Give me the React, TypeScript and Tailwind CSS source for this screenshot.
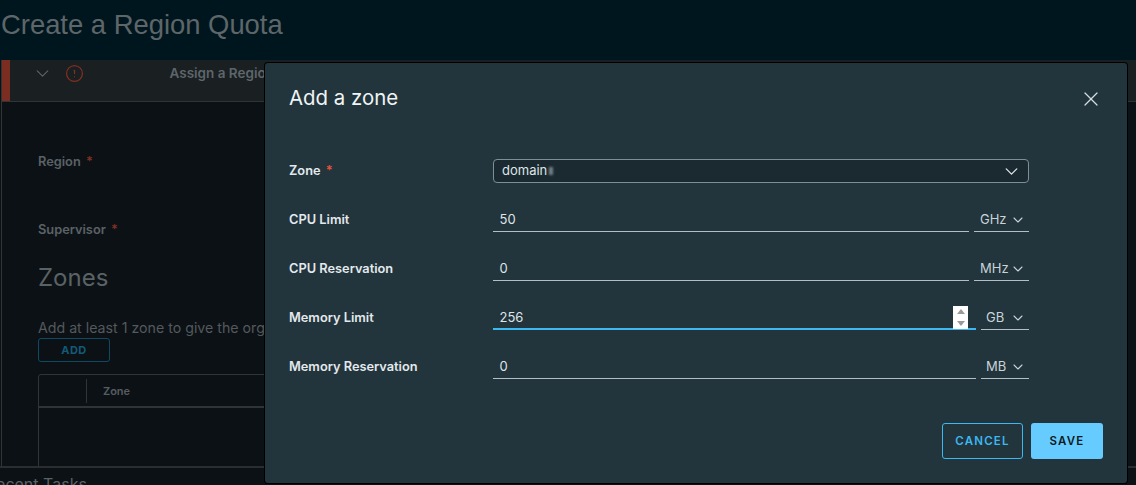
import { AlertCircle, ChevronDown, X } from 'lucide-react';

const font = "[font-family:'Inter',sans-serif]";

function UnitSelect({ unit, narrow }: { unit: string; narrow?: boolean }) {
  return (
    <div className={`flex h-[24px] items-center justify-between border-b border-[#b3bfc5] text-[13px] text-[#c9d3d8] ${narrow ? 'w-[48px] pl-[5px]' : 'w-[55px] pl-[6px]'}`}>
      <span>{unit}</span>
      <ChevronDown className="mr-[3px] text-[#c9d3d8]" size={16} strokeWidth={1.6} />
    </div>
  );
}

function Row({ label, value, unit, focused, wide }: { label: string; value: string; unit: string; focused?: boolean; wide?: boolean }) {
  return (
    <div className="flex h-[24px] items-end">
      <label className="w-[204px] self-center text-[12.8px] font-semibold text-[#e3e9ec]">{label}</label>
      <div className={`relative flex h-[24px] items-center pl-[6.5px] text-[13px] text-[#dfe5e8] ${wide ? 'w-[483px]' : 'w-[476px]'} ${focused ? 'border-b-2 border-[#3db8f0] pt-[1px]' : 'border-b border-[#b3bfc5]'}`}>
        {value}
        {focused && (
          <div className="absolute right-[8px] top-0 flex h-[23px] w-[15px] flex-col items-center justify-center gap-[7px] bg-white">
            <svg width="8" height="5" viewBox="0 0 8 5"><path d="M4 0 8 5H0z" fill="#9a9a9a" /></svg>
            <svg width="8" height="5" viewBox="0 0 8 5"><path d="M0 0h8L4 5z" fill="#9a9a9a" /></svg>
          </div>
        )}
      </div>
      <div className="ml-[5px]">
        <UnitSelect unit={unit} narrow={wide} />
      </div>
    </div>
  );
}

export default function App() {
  return (
    <div className={`relative h-[485px] w-[1136px] overflow-hidden bg-[#0c1115] ${font}`}>
      <div className="flex h-[60px] items-center bg-[#00161f] pl-[1px] pb-[10px] text-[27.4px] text-[#5e6669] [font-family:'Liberation_Sans',sans-serif]">
        Create a Region Quota
      </div>

      <div className="ml-[1px] h-[406px] border-l border-[#2f3437]">
        <div className="flex h-[42px] border-b border-[#2f3437] bg-[#1a1f22]">
          <div className="h-full w-[8px] bg-[#7a2d20]" />
          <div className="flex h-[26px] items-center">
            <ChevronDown className="ml-[21.5px] text-[#5a6367]" size={21} strokeWidth={1.4} />
            <AlertCircle className="ml-[12px] text-[#7f2f22]" size={19} strokeWidth={1.6} />
            <span className="ml-[86px] text-[13.5px] font-semibold text-[#5e666a]">Assign a Region</span>
          </div>
        </div>
        <div className="pl-[36px]">
          <div className="mt-[50px] text-[12.8px] font-semibold text-[#5a6266]">Region <span className="ml-[2px] text-[#7f2f22]">*</span></div>
          <div className="mt-[49px] text-[12.8px] font-semibold text-[#5a6266]">Supervisor <span className="ml-[2px] text-[#7f2f22]">*</span></div>
          <div className="mt-[21px] text-[24px] text-[#5a6266]">Zones</div>
          <div className="mt-[23px] whitespace-nowrap text-[14.2px] leading-[18px] text-[#53595d]">Add at least 1 zone to give the org</div>
          <div className="mt-[1px] flex h-[24px] w-[72px] items-center justify-center rounded-[3px] border border-[#0f4a63] text-[11px] font-bold tracking-[0.5px] text-[#125a78]">ADD</div>
          <div className="mt-[12px] h-[100px] w-[300px] rounded-t-[3px] border border-[#2f3437]">
            <div className="flex h-[33px] items-center border-b-2 border-[#2f3437]">
              <div className="h-[24px] w-[48px] border-r border-[#2f3437]" />
              <span className="ml-[16px] text-[11px] font-semibold text-[#565d61]">Zone</span>
            </div>
          </div>
        </div>
      </div>

      <div className="absolute bottom-0 left-0 h-[19px] w-full border-t-2 border-[#2a2e31] bg-[#0c1115] pt-[6px] text-[16px] leading-[20px] text-[#5a6266]">
        <span className="ml-[-14px]">Recent Tasks</span>
      </div>

      <div className="absolute left-[265px] top-[63px] h-[420px] w-[862px] rounded-[3px] bg-[#22343c] pl-[24px] shadow-[0_0_0_1px_#000]">
        <div className="flex h-[70px] items-center justify-between pr-[24px]">
          <h2 className="text-[20.4px] text-[#f1f4f5]">Add a zone</h2>
          <X className="mt-[2px] text-[#d5dde0]" size={24} strokeWidth={1.2} />
        </div>
        <div className="mt-[26px] flex h-[24px] items-center">
          <label className="w-[204px] text-[12.8px] font-semibold text-[#e3e9ec]">Zone <span className="ml-[2px] text-[#e0523a]">*</span></label>
          <div className="relative flex h-[24px] w-[536px] items-center justify-between rounded-[4px] border border-[#7f8f97] bg-[#1b2a30] pl-[8px] pr-[6px] text-[13px] text-[#dfe5e8]">
            <span>domain</span>
            <span className="absolute left-[55px] top-[7px] h-[8px] w-[4px] bg-[#6f7f87] blur-[1px]" />
            <ChevronDown size={21} strokeWidth={1.5} className="text-[#dfe5e8]" />
          </div>
        </div>
        <div className="mt-[25px] flex flex-col gap-[25px]">
          <Row label="CPU Limit" value="50" unit="GHz" />
          <Row label="CPU Reservation" value="0" unit="MHz" />
          <Row label="Memory Limit" value="256" unit="GB" focused wide />
          <Row label="Memory Reservation" value="0" unit="MB" wide />
        </div>
        <div className="absolute bottom-[24px] right-[24px] flex gap-[8px]">
          <button className="flex h-[36px] w-[81px] items-center justify-center rounded-[3px] border border-[#3db8f0] pt-[2px] text-[11.5px] font-semibold tracking-[1.2px] text-[#3db8f0]">CANCEL</button>
          <button className="flex h-[36px] w-[72px] items-center justify-center rounded-[3px] bg-[#66ccff] pt-[2px] text-[11.5px] font-semibold tracking-[1.2px] text-[#0c1a20]">SAVE</button>
        </div>
      </div>
    </div>
  );
}
